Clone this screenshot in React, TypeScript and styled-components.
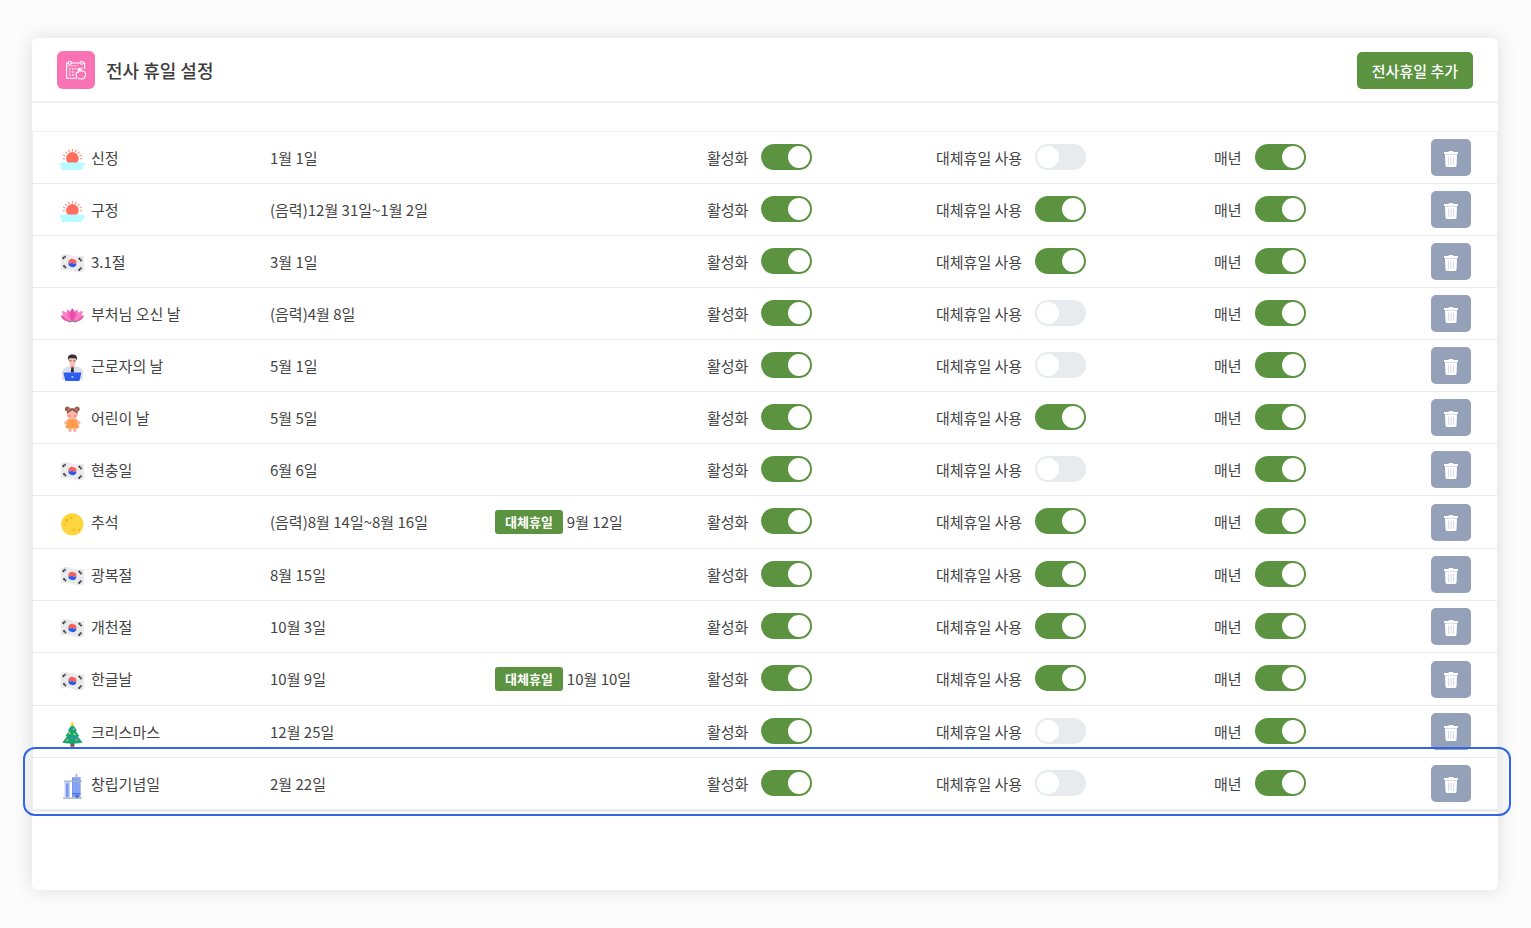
import React, { useState } from 'react';
import styled, { createGlobalStyle, css } from 'styled-components';

const GlobalStyle = createGlobalStyle`
  *, *::before, *::after { box-sizing: border-box; }
  body {
    margin: 0;
    background: #fcfcfc;
    color: #444;
    font-family: "Noto Sans CJK KR", "Noto Sans", sans-serif;
    font-size: 15px;
    line-height: 24px;
  }
`;

const Page = styled.main`
  min-height: 100vh;
  padding: 38px 33px 38px 32px;
  display: flex;
`;

const Card = styled.section`
  flex: 1;
  min-width: 0;
  background: #fff;
  border-radius: 6px;
  box-shadow: 0 0 20px rgba(0, 0, 0, 0.13);
`;

const Header = styled.header`
  display: flex;
  align-items: center;
  gap: 11px;
  height: 65px;
  padding: 0 25px;
  border-bottom: 2px solid #f1f1f1;
`;

const TitleIcon = styled.span`
  display: flex;
  align-items: center;
  justify-content: center;
  width: 38px;
  height: 38px;
  border-radius: 6px;
  background: #f973b4;
`;

const Title = styled.h1`
  flex: 1;
  margin: 0;
  font-size: 18px;
  font-weight: 500;
  color: #3d3d3d;
`;

const AddButton = styled.button`
  height: 37px;
  margin-top: 2px;
  padding: 0 15px;
  border: 0;
  border-radius: 5px;
  background: #5c9340;
  color: #fff;
  font: inherit;
  font-weight: 500;
  cursor: pointer;
`;

const TableArea = styled.div`
  padding: 29px 1px 0;
`;

const Table = styled.table`
  width: 100%;
  table-layout: fixed;
  border-collapse: separate;
  border-spacing: 0;
  border-bottom: 1px solid #ebebeb;
  box-shadow: 0 0 0 1px #efefef;
`;

const Col = styled.col<{ $w: number }>`
  width: ${(p) => p.$w}px;
`;

const Row = styled.tr<{ $tall?: boolean; $marked?: boolean }>`
  position: relative;

  > * {
    height: ${(p) => (p.$tall ? 53 : 52)}px;
    padding: 0;
    border-bottom: 1px solid #ebebeb;
    text-align: left;
    vertical-align: middle;
    font-weight: 400;
    white-space: nowrap;
  }

  ${(p) =>
    p.$marked &&
    css`
      &::after {
        content: '';
        position: absolute;
        inset: -11px -14px -6px -10px;
        border: 2px solid #2f66e8;
        border-radius: 12px;
        pointer-events: none;
      }
    `}
`;

const Name = styled.span`
  display: flex;
  align-items: center;
  gap: 6px;
  padding-left: 27px;
`;

const Glyph = styled.svg`
  flex: none;
  width: 25px;
  height: 28px;
  margin-top: 3px;
`;

const Substitute = styled.span`
  display: flex;
  align-items: center;
  gap: 4px;
`;

const Badge = styled.span`
  padding: 0 10px;
  border-radius: 3px;
  background: #5c9340;
  color: #fff;
  font-size: 13px;
  font-weight: 700;
`;

const ToggleLabel = styled.label`
  display: inline-flex;
  align-items: center;
  gap: 13px;
  vertical-align: middle;
`;

const Switch = styled.input`
  appearance: none;
  display: block;
  width: 51px;
  height: 26px;
  margin: 0 0 2px;
  padding: 2px;
  border-radius: 13px;
  background: #e8ebee;
  cursor: pointer;

  &::before {
    content: '';
    display: block;
    width: 22px;
    height: 22px;
    border-radius: 50%;
    background: #fff;
  }

  &:checked {
    background: #5c9340;
  }

  &:checked::before {
    margin-left: 25px;
  }
`;

const DeleteButton = styled.button`
  display: flex;
  align-items: center;
  justify-content: center;
  width: 40px;
  height: 37px;
  padding: 2px 0 0;
  border: 0;
  border-radius: 5px;
  background: #95a1b8;
  cursor: pointer;
`;

const TrashIcon = () => (
  <svg width="14" height="16" viewBox="0 0 14 16" aria-hidden="true">
    <path d="M4.4 1L5 0H9L9.6 1H13.5Q14 1 14 1.5V3H0V1.5Q0 1 .5 1Z" fill="#fff" />
    <path d="M1 3.6H13L12.5 14.6Q12.4 16 11 16H3Q1.6 16 1.5 14.6Z" fill="#fff" />
    <path d="M1 3.4H13" stroke="#dfe3ec" strokeWidth=".8" />
    <path d="M4.4 6V13.6M7 6V13.6M9.6 6V13.6" stroke="#d3d8e3" strokeWidth="1" strokeLinecap="round" />
  </svg>
);

const CalendarIcon = () => (
  <svg width="22" height="20" viewBox="0 0 22 20" fill="none" stroke="#fff" strokeWidth="1.1" aria-hidden="true">
    <path d="M3.2 3H1.6V18.2H12M18.4 3H19.6V9M6.6 3H15" />
    <circle cx="4.9" cy="2.8" r="1.6" />
    <circle cx="16.7" cy="2.8" r="1.6" />
    <path d="M2 5.8H12.5" strokeOpacity=".5" />
    <path d="M4.2 9H11.5M4.2 12H10M4.2 15H10" strokeDasharray="1.6 1.2" strokeWidth="1.3" strokeOpacity=".85" />
    <path d="M13.4 12.5V9.2C13.4 8 15 8 15 9.2V11C17.5 10.6 20.6 11.3 20.6 14C20.6 17 18.7 19 16 19C13.2 19 11 17 11 14.2C11 12.8 12 12.1 13.4 12.5Z" />
    <path d="M12.7 8.6L14.6 10.6L17.4 7.6" />
  </svg>
);

const Sunrise = () => (
  <>
    <circle cx="12.4" cy="13.4" r="6.3" fill="#ff6e5f" />
    <path
      d="M12.4 4.4V6M8.7 5.1L9.3 6.6M16.1 5.1L15.5 6.6M5.6 7.2L6.7 8.3M19.2 7.2L18.1 8.3M3.5 10.3L5 10.9M21.3 10.3L19.8 10.9M3 13.8H4.5M21.8 13.8H20.3"
      stroke="#ff8a7c"
      strokeWidth="1.1"
      strokeLinecap="round"
    />
    <path
      d="M1.8 17.6H23A1.8 1.8 0 0 1 23 21.2C22.4 21.2 22.6 25 21.2 25H4A1.9 1.9 0 0 1 2.6 21.2H1.8A1.8 1.8 0 0 1 1.8 17.6Z"
      fill="#b6fbff"
    />
  </>
);

const Flag = () => (
  <>
    <path d="M.8 6.4C5 4 9 5.2 12.4 6.4C16 7.7 20 8 24 6.8V22C20 24.2 16 23.4 12.4 22C9 20.6 5 19.8.8 22Z" fill="#e9eaec" />
    <path d="M8.3 13.6A4.1 4.1 0 0 1 16.5 14.4C14.8 16 13.8 14 12.4 14C11 14 9.8 15.4 8.3 13.6Z" fill="#f8615a" />
    <path d="M8.3 13.6C9.8 15.4 11 13.6 12.4 14C13.8 14.3 14.8 16 16.5 14.4A4.1 4.1 0 0 1 8.3 13.6Z" fill="#2c5bf0" />
    <path d="M2.7 9.8L5.6 7.2M18.8 9L21.6 12M3.4 16.4L6 19M18.6 21.6L21.4 18.6" stroke="#3c3f45" strokeWidth="2" strokeDasharray="2.2 .4" />
  </>
);

const Lotus = () => (
  <>
    <path d="M6 19.5H19L15.5 21.6L12.5 20.8L9.5 21.6Z" fill="#34ad84" />
    <path d="M.8 14.8C5 13.8 9 16 12.4 20.2C6.8 21.2 2.5 19.8.8 14.8ZM24 14.8C20 13.8 16 16 12.4 20.2C18 21.2 22.3 19.8 24 14.8Z" fill="#e75cab" />
    <path d="M2 10C7 10.4 11 14 12.4 20C6.5 19.8 2.6 16 2 10ZM22.8 10C17.8 10.4 13.8 14 12.4 20C18.3 19.8 22.2 16 22.8 10Z" fill="#fa81c5" />
    <path d="M7.4 8.4C11 10.4 12.6 14.8 12.4 20C8 17.4 6.3 12.8 7.4 8.4ZM17.4 8.4C13.8 10.4 12.2 14.8 12.4 20C16.8 17.4 18.5 12.8 17.4 8.4Z" fill="#f569b8" />
    <path d="M12.4 7.2C16 11 16 16 12.4 20.2C8.8 16 8.8 11 12.4 7.2Z" fill="#ea4da6" />
  </>
);

const Worker = () => (
  <>
    <path d="M2 26.4V20C2 15 6 13.8 9.4 13.2H15.4C19 13.8 22.8 15 22.8 20V26.4Z" fill="#dcdfe9" />
    <path d="M10.3 10H14.5V14L12.4 16L10.3 14Z" fill="#efaaa0" />
    <ellipse cx="12.4" cy="7.6" rx="3.7" ry="4.6" fill="#fbc0b4" />
    <path d="M8.2 7.4C7.4 4 8.2 1.4 12.4 1.4C17 1.4 17.4 4 16.6 7.4C16 6 15.6 5.2 15 5.2H9.8C9 5.2 8.6 6 8.2 7.4Z" fill="#30313c" />
    <path d="M9.4 7.8H11.6M13.2 7.8H15.4" stroke="#6d4a4a" strokeWidth=".8" />
    <path d="M11.3 14.2H13.5L14 19.6H10.8Z" fill="#2b2d3b" />
    <path d="M4.2 19.4H20.6C21.2 19.4 21.3 19.8 21.2 20.3L19.7 27.2Q19.5 28 18.6 28H6.2Q5.3 28 5.1 27.2L3.6 20.3C3.5 19.8 3.6 19.4 4.2 19.4Z" fill="#2d5cee" />
    <circle cx="12.4" cy="24" r="1" fill="#b9cafb" />
  </>
);

const Doll = () => (
  <>
    <circle cx="7.4" cy="4" r="2.5" fill="#9a6550" />
    <circle cx="17.2" cy="4" r="2.5" fill="#9a6550" />
    <path d="M8.5 21H11.6V26Q10 28.4 8.5 26ZM13.2 21H16.3V26Q14.7 28.4 13.2 26Z" fill="#f8b0a0" />
    <path d="M8 14.5L4.6 17.6Q4.6 19.4 6.4 19ZM16.8 14.5L20.2 17.6Q20.2 19.4 18.4 19Z" fill="#f8b0a0" stroke="#f8b0a0" />
    <circle cx="12.3" cy="9.2" r="5.4" fill="#fbb7aa" />
    <path d="M6.9 9C6.7 4.8 9 3.2 12.3 3.2S17.9 4.8 17.7 9C16.4 7.5 14.5 6.7 12.3 5.2C10.1 6.7 8.2 7.5 6.9 9Z" fill="#8a5847" />
    <path d="M8 5.5L9.4 4.2M16.6 5.5L15.2 4.2" stroke="#ff6d79" strokeWidth="1.5" />
    <circle cx="9.3" cy="11" r="1.2" fill="#fa8c8d" />
    <circle cx="15.3" cy="11" r="1.2" fill="#fa8c8d" />
    <path d="M8.4 14H16.2L19 21.6Q19.1 23.5 17.3 23.5H7.3Q5.5 23.5 5.6 21.6Z" fill="#ff9f4d" />
    <path d="M12.3 16V17M12.3 19V20" stroke="#e9813b" />
  </>
);

const Moon = () => (
  <>
    <circle cx="12.3" cy="14.3" r="11.1" fill="#fdd63f" />
    <g fill="#f2be18">
      <circle cx="6.6" cy="10.6" r="1.9" />
      <circle cx="11.3" cy="7.8" r="1.4" />
      <circle cx="4.6" cy="14.8" r="1" />
      <circle cx="14" cy="19.4" r="1.5" />
      <circle cx="19" cy="20" r="1.2" />
      <circle cx="9.3" cy="8.2" r=".7" />
    </g>
  </>
);

const Tree = () => (
  <>
    <path d="M10.4 23H14.4V27.8H10.4Z" fill="#8c5738" />
    <path d="M12.4 5L17 11.5L15.6 12L19.4 17L17.8 17.6L22.6 23.6Q17.5 25 12.4 24.4Q7.3 25 2.2 23.6L7 17.6L5.4 17L9.2 12L7.8 11.5Z" fill="#10a874" />
    <path d="M12.4 2.6L13.2 4.3L15 4.5L13.7 5.7L14.1 7.5L12.4 6.6L10.7 7.5L11.1 5.7L9.8 4.5L11.6 4.3Z" fill="#ffd43c" />
    <circle cx="13.6" cy="10.2" r="1" fill="#b0a4dc" />
    <circle cx="9.4" cy="14.3" r="1" fill="#f6ce48" />
    <circle cx="14.5" cy="15.2" r="1" fill="#f6ce48" />
    <circle cx="11.8" cy="19.2" r="1" fill="#557fe8" />
    <circle cx="16.5" cy="20.8" r="1.1" fill="#f6819a" />
    <circle cx="7.2" cy="21.2" r="1.1" fill="#f3a053" />
    <circle cx="16.3" cy="17.4" r=".8" fill="#557fe8" />
  </>
);

const Building = () => (
  <>
    <path d="M4.5 10.4H10V27H4.5Z" fill="#c3cff5" />
    <path d="M6 12.4H8.6V26H6Z" fill="#7b98ec" />
    <path d="M15.2 6V3.8H17.8V6" fill="#c6cad4" />
    <path d="M16.5 2.6V5" stroke="#aab1c2" />
    <path d="M12 6.2H20.6V26.6H12Z" fill="#7c9aee" />
    <path d="M14.5 7V23M17 7V23M19 7V23" stroke="#9cb4f6" strokeWidth=".7" />
    <path d="M4 10.1H22" stroke="#a7aebf" strokeWidth="1.2" />
    <path d="M12 22.7H20.6" stroke="#4268da" />
    <path d="M15.8 24H18.4V27H15.8Z" fill="#3e64d6" />
    <path d="M3 27.3H22" stroke="#b4bac8" strokeWidth="1.4" />
  </>
);

type Holiday = {
  name: string;
  date: string;
  icon: () => React.ReactElement;
  useSubstitute: boolean;
  substitute?: string;
  marked?: boolean;
};

const holidays: Holiday[] = [
  { name: '신정', date: '1월 1일', icon: Sunrise, useSubstitute: false },
  { name: '구정', date: '(음력)12월 31일~1월 2일', icon: Sunrise, useSubstitute: true },
  { name: '3.1절', date: '3월 1일', icon: Flag, useSubstitute: true },
  { name: '부처님 오신 날', date: '(음력)4월 8일', icon: Lotus, useSubstitute: false },
  { name: '근로자의 날', date: '5월 1일', icon: Worker, useSubstitute: false },
  { name: '어린이 날', date: '5월 5일', icon: Doll, useSubstitute: true },
  { name: '현충일', date: '6월 6일', icon: Flag, useSubstitute: false },
  { name: '추석', date: '(음력)8월 14일~8월 16일', icon: Moon, useSubstitute: true, substitute: '9월 12일' },
  { name: '광복절', date: '8월 15일', icon: Flag, useSubstitute: true },
  { name: '개천절', date: '10월 3일', icon: Flag, useSubstitute: true },
  { name: '한글날', date: '10월 9일', icon: Flag, useSubstitute: true, substitute: '10월 10일' },
  { name: '크리스마스', date: '12월 25일', icon: Tree, useSubstitute: false },
  { name: '창립기념일', date: '2월 22일', icon: Building, useSubstitute: false, marked: true },
];

const columnWidths = [237, 225, 212, 229, 278, 217, 66];

function Toggle({ label, initial }: { label: string; initial: boolean }) {
  const [on, setOn] = useState(initial);
  return (
    <ToggleLabel>
      {label}
      <Switch type="checkbox" checked={on} onChange={(e) => setOn(e.target.checked)} />
    </ToggleLabel>
  );
}

function HolidayRow({ holiday }: { holiday: Holiday }) {
  const Icon = holiday.icon;
  return (
    <Row $tall={!!holiday.substitute} $marked={holiday.marked}>
      <th scope="row">
        <Name>
          <Glyph viewBox="0 0 25 28" fill="none" aria-hidden="true">
            <Icon />
          </Glyph>
          {holiday.name}
        </Name>
      </th>
      <td>{holiday.date}</td>
      <td>
        {holiday.substitute && (
          <Substitute>
            <Badge>대체휴일</Badge>
            {holiday.substitute}
          </Substitute>
        )}
      </td>
      <td>
        <Toggle label="활성화" initial />
      </td>
      <td>
        <Toggle label="대체휴일 사용" initial={holiday.useSubstitute} />
      </td>
      <td>
        <Toggle label="매년" initial />
      </td>
      <td>
        <DeleteButton type="button" aria-label={`${holiday.name} 삭제`}>
          <TrashIcon />
        </DeleteButton>
      </td>
    </Row>
  );
}

export default function App() {
  return (
    <>
      <GlobalStyle />
      <Page>
        <Card>
          <Header>
            <TitleIcon>
              <CalendarIcon />
            </TitleIcon>
            <Title>전사 휴일 설정</Title>
            <AddButton type="button">전사휴일 추가</AddButton>
          </Header>
          <TableArea>
            <Table>
              <colgroup>
                {columnWidths.map((w, i) => (
                  <Col key={i} $w={w} />
                ))}
              </colgroup>
              <tbody>
                {holidays.map((h) => (
                  <HolidayRow key={h.name} holiday={h} />
                ))}
              </tbody>
            </Table>
          </TableArea>
        </Card>
      </Page>
    </>
  );
}
